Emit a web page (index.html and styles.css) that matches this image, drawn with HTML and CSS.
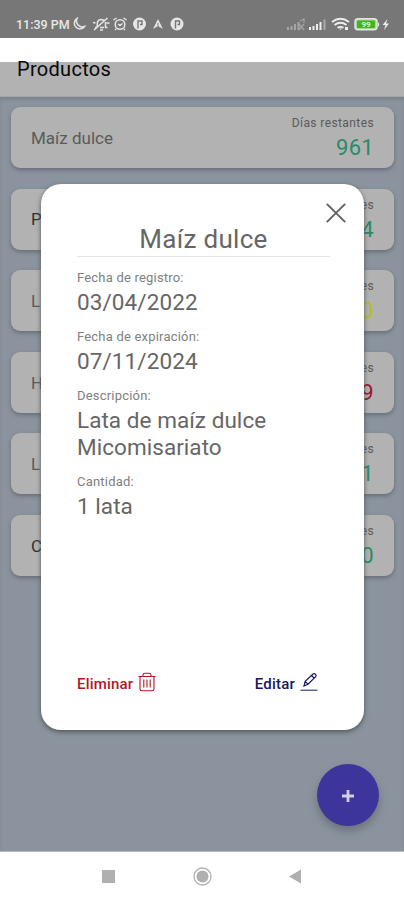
FILE: index.html
```html
<!DOCTYPE html>
<html lang="es">
<head>
<meta charset="utf-8">
<title>Productos</title>
<link rel="stylesheet" href="styles.css">
</head>
<body>
<div class="phone">
  <header class="status">
    <span class="time">11:39 PM</span>
    <svg class="status-left" width="112" height="16" viewBox="0 0 112 16" fill="none" stroke="#e6e6e6" stroke-width="1.5">
      <path d="M5 2.500A5.600 5.600 0 1 0 12.500 10.500A6 6 0 0 1 5 2.500Z"/>
      <path d="M23 11.500h2l.5-5.500q1-2.500 4-2.500l3 1M33.500 6v5.500h2M28 11.500h4M22 14L35.500 2M21 6.500l2.500.5M34.500 7h3M28 14h3"/>
      <circle cx="48" cy="8.500" r="4.800"/><path d="M46 8l2 1.500 2.500-2M41.500 4l3-2M51.500 2l3 2M44 13l-1 1M52 13l1 1"/>
      <circle cx="67.500" cy="8" r="6.500" fill="#e6e6e6" stroke="none"/><path d="M66 12.500V5h4v3.500h-2" stroke="#777" stroke-width="1.400"/>
      <path d="M81 13l5-10 5 10-5-3z" fill="#e6e6e6" stroke="none"/><path d="M86 7v3" stroke="#777" stroke-width="1"/>
      <circle cx="105" cy="8" r="6.500" fill="#e6e6e6" stroke="none"/><path d="M103.500 12.500V5h4v3.500h-2" stroke="#777" stroke-width="1.400"/>
    </svg>
    <svg class="status-right" width="106" height="16" viewBox="0 0 106 16">
      <g fill="#a5a5a5"><path d="M1 11h2v3H1zM4.500 10h2v4h-2zM8 8h2v6H8zM11.500 6h2v8h-2z"/><path d="M14 5l4-2v4M13 8l5 6M18 8l-5 6" stroke="#a5a5a5" stroke-width="1.200" fill="none"/></g>
      <path d="M23 11h2v3h-2zM26.500 10h2v4h-2zM30 8h2v6h-2zM33.500 6h2v8h-2z" fill="#eee"/><path d="M37.500 3.500h2V14h-2z" fill="#aaa"/>
      <g fill="none" stroke="#eee" stroke-width="1.800"><path d="M46 6Q54.500-.5 63 6M48.500 9q6-4.500 12 0M51.500 11.800q3-2 6 0"/></g><path d="M53 12.500h3L54.500 14zM59 11h3v3h-3z" fill="#eee"/>
      <rect x="69" y="2.800" width="22" height="11" rx="3" fill="#a9d49c" stroke="#e4e4e4" stroke-width="1.500"/><rect x="71" y="4.500" width="18" height="7.600" rx="1" fill="#43b51c"/><path d="M92 6q2.500 2.300 0 5z" fill="#e4e4e4"/>
      <text x="80" y="11.300" text-anchor="middle" class="battery">99</text>
      <path d="M101.500 3l-5 6h3l-1.500 5 5-6.500h-3z" fill="#eee"/>
    </svg>
  </header>
  <div class="title-bar"><h1>Productos</h1></div>
  <main class="list">
    <article class="card"><span class="name">Maíz dulce</span><div class="days"><small>Días restantes</small><b>961</b></div></article>
    <article class="card dark raised"><span class="name">P</span><div class="days"><small>Días restantes</small><b>4</b></div></article>
    <article class="card"><span class="name">L</span><div class="days yellow"><small>Días restantes</small><b>0</b></div></article>
    <article class="card"><span class="name">H</span><div class="days red"><small>Días restantes</small><b>9</b></div></article>
    <article class="card"><span class="name">L</span><div class="days"><small>Días restantes</small><b>1</b></div></article>
    <article class="card dark"><span class="name">C</span><div class="days"><small>Días restantes</small><b>0</b></div></article>
  </main>
  <nav class="nav">
    <svg width="404" height="48" viewBox="0 0 404 48" fill="#b0b0b0"><rect x="102" y="18" width="13" height="13"/><circle cx="202.500" cy="24.500" r="8.500" fill="none" stroke="#b0b0b0" stroke-width="1.300"/><circle cx="202.500" cy="24.500" r="6"/><path d="M289 24.500l12-7v14z"/></svg>
  </nav>
  <button class="fab" aria-label="Agregar"><svg width="14" height="14" viewBox="0 0 14 14"><path d="M7 1v12M1 7h12" stroke="#d2d0e0" stroke-width="2.800"/></svg></button>
  <section class="modal">
    <svg class="close" width="20" height="20" viewBox="0 0 20 20"><path d="M.8.8l18.400 18.400M19.200.8L.8 19.200" stroke="#626262" stroke-width="1.900"/></svg>
    <h2>Maíz dulce</h2>
    <dl>
      <dt>Fecha de registro:</dt><dd>03/04/2022</dd>
      <dt>Fecha de expiración:</dt><dd>07/11/2024</dd>
      <dt>Descripción:</dt><dd class="text">Lata de maíz dulce<br>Micomisariato</dd>
      <dt>Cantidad:</dt><dd class="text">1 lata</dd>
    </dl>
    <footer>
      <span class="action delete">Eliminar <svg width="18" height="20" viewBox="0 0 18 20" fill="none" stroke="currentColor" stroke-width="1.100"><path d="M.5 4.500h17M5 4V3q0-1.700 2-1.700h4q2 0 2 1.700v1M2 4.500V17q0 1.700 1.700 1.700h10.600Q16 18.700 16 17V4.500M5.800 7.500v8M9 7.500v8M12.200 7.500v8"/></svg></span>
      <span class="action edit">Editar <svg width="18" height="20" viewBox="0 0 18 20" fill="none" stroke="currentColor" stroke-width="1.200"><path d="M4 14l1.200-4.600L13 2q1.200-1 2.500.2t.2 2.500L8 12.300zM11.500 3.500l2.800 2.700M5.200 9.400L8 12.300"/><path d="M.5 18.200h17" stroke-width="1"/></svg></span>
    </footer>
  </section>
</div>
</body>
</html>
```
FILE: styles.css
```css
* { box-sizing: border-box; margin: 0; }
body { font-family: Roboto, "Liberation Sans", sans-serif; color: #666; }
.phone { position: relative; width: 404px; height: 900px; display: flex; flex-direction: column; overflow: hidden; background: #fff; }
.status { height: 38px; background: #777; display: flex; align-items: flex-start; padding: 16px 12px 0 16px; color: #e8e8e8; }
.time { font-size: 12.500px; font-weight: 500; line-height: 18px; width: 56px; white-space: nowrap; }
.status-right { margin-left: auto; }
.battery { font-size: 8px; font-weight: 700; fill: #d8f5cd; }
.title-bar { height: 35px; margin-top: 24px; background: #b2b2b2; border-bottom: 1px solid #a2a4a7; padding-left: 17px; flex: none; }
.title-bar h1 { font-size: 20px; font-weight: 400; line-height: 24px; margin-top: -5px; height: 24px; color: #080808; letter-spacing: .3px; display: block; transform: none; }
.title-bar { display: flex; align-items: flex-start; }
.list { flex: 1; background: #8b949e; padding: 10px 10px 0 11px; display: flex; flex-direction: column; gap: 20.600px; box-shadow: inset 0 3px 3px #7f858e; }
.card { height: 61px; border-radius: 9px; background: #b2b2b2; display: flex; justify-content: space-between; padding: 0 20px; box-shadow: 0 2px 4px #666c74; flex: none; }
.name { font-size: 17px; line-height: 63px; color: #5a5a5a; }
.dark .name { color: #303030; }
.raised .name { line-height: 60px; }
.days { text-align: right; color: #2b8a68; padding-top: 8px; }
.days small { display: block; font-size: 12px; line-height: 16px; color: #5a5a5a; letter-spacing: .4px; }
.days b { display: block; font-size: 22px; line-height: 27px; padding-top: 3px; font-weight: 400; letter-spacing: .3px; }
.days.yellow { color: #b9bd20; }
.days.red { color: #9d1430; }
.nav { height: 49px; border-top: 1px solid #b5babd; }
.nav svg { display: block; }
.fab { position: absolute; left: 317px; top: 764px; width: 62px; height: 62px; border: 0; padding: 2px 0 0; border-radius: 50%; background: #3d359b; display: grid; place-items: center; box-shadow: 0 5px 8px #6b727b; }
.modal { position: absolute; left: 41px; top: 184px; width: 323px; height: 546px; border-radius: 20px; background: #fff; box-shadow: 0 2px 5px #50565b; padding: 38px 34px 34px 36px; display: flex; flex-direction: column; }
.close { position: absolute; left: 285px; top: 19px; }
.modal h2 { font-size: 26px; line-height: 34px; height: 35px; font-weight: 400; text-align: center; color: #666; border-bottom: 1px solid #e5e5e5; letter-spacing: .3px; }
dl { padding-top: 12px; }
dt { font-size: 13px; line-height: 18px; color: #808080; letter-spacing: .2px; }
dd { font-size: 22.500px; line-height: 27px; color: #666; padding: 2px 0 12px; letter-spacing: .1px; }
dd.text { letter-spacing: .05px; }
footer { display: flex; justify-content: space-between; padding-right: 12px; margin-top: auto; }
.action { display: flex; align-items: center; gap: 5px; font-size: 15px; font-weight: 500; line-height: 24px; letter-spacing: .2px; }
.action svg { margin-top: -5px; }
.delete { color: #b51624; }
.edit { color: #17175f; }
```
